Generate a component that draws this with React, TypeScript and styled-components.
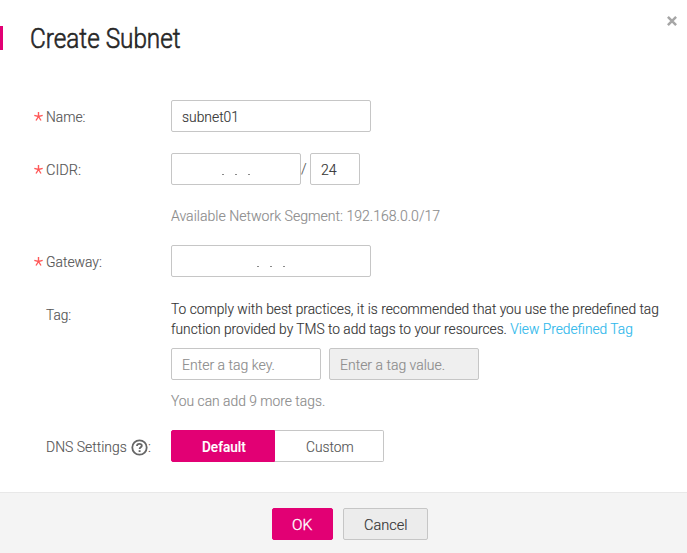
import React from "react";
import styled, { createGlobalStyle, css } from "styled-components";

const GlobalStyle = createGlobalStyle`
  * { box-sizing: border-box; }
  html, body { margin: 0; background: #fff; }
  body {
    font-family: Roboto, "Liberation Sans", sans-serif;
    font-size: 15px;
    font-weight: 300;
    line-height: 20px;
    color: #333;
    -webkit-text-stroke-width: 0.15px;
  }
`;

/* Condenses its text horizontally from the left edge. */
const Condensed = styled.span<{ $k: number }>`
  display: block;
  width: max-content;
  white-space: pre;
  transform: scaleX(${(p) => p.$k});
  transform-origin: 0 50%;
`;

const Dialog = styled.div`
  display: flex;
  flex-direction: column;
  height: 553px;
  overflow: hidden;
`;

const Header = styled.header`
  display: flex;
  justify-content: space-between;
  height: 100px;
`;

const Title = styled.h1`
  height: 24px;
  margin: 26px 0 0;
  padding-left: 27px;
  border-left: 3px solid #e20074;
  font-size: 27px;
  font-weight: 300;
  line-height: 26px;
  color: #262626;
  -webkit-text-stroke-width: 0.6px;
`;

const Close = styled.button`
  width: 10px;
  height: 10px;
  margin: 16px 10px 0 0;
  padding: 0;
  border: 0;
  background: none;
  svg { display: block; }
`;

const Form = styled.main`
  flex: 1;
  padding-left: 33px;
`;

const Row = styled.div<{ $gap: number }>`
  display: flex;
  align-items: flex-start;
  margin-bottom: ${(p) => p.$gap}px;
`;

const Label = styled.div<{ $lift?: number }>`
  display: flex;
  flex: none;
  align-items: center;
  width: 138px;
  height: ${(p) => 32 - 2 * (p.$lift ?? 0)}px;
  padding-top: 2px;
  color: #555;
`;

const LabelText = styled.div<{ $w: number }>`
  width: ${(p) => p.$w}px;
`;

const Mark = styled.span`
  flex: none;
  width: 13px;
  height: 10px;
  padding-left: 1px;
  svg { display: block; }
`;

const HelpIcon = styled.svg`
  flex: none;
  margin-top: 1px;
`;

const Content = styled.div`
  display: flex;
  flex-direction: column;
`;

const Line = styled.div<{ $gap?: number }>`
  display: flex;
  align-items: center;
  gap: ${(p) => p.$gap ?? 0}px;
`;

const Field = styled.div<{ $w: number; $muted?: boolean; $disabled?: boolean }>`
  display: flex;
  align-items: center;
  width: ${(p) => p.$w}px;
  height: 32px;
  padding: 2px 0 0 10px;
  border: 1px solid #c6c6c6;
  border-radius: 2px;
  background: ${(p) => (p.$disabled ? "#efefef" : "#fff")};
  color: ${(p) => (p.$muted ? "#8c8c8c" : "#333")};
`;

const Dots = styled.div<{ $left: number }>`
  display: flex;
  gap: 11px;
  padding: 8px 0 0 ${(p) => p.$left}px;
  span { width: 2px; height: 1px; background: #8a8a8a; }
`;

const Slash = styled.div`
  width: 9px;
  height: 20px;
  color: #555;
`;

const Hint = styled.div<{ $top: number }>`
  margin-top: ${(p) => p.$top}px;
  color: #8c8c8c;
`;

const Advice = styled.div`
  margin-bottom: 9px;
`;

const Link = styled.a`
  color: #2db8ec;
`;

const Segmented = styled.div`
  display: flex;
`;

const Segment = styled.button<{ $active?: boolean }>`
  height: 32px;
  padding: 2px 0 0 30px;
  border: 1px solid #c6c6c6;
  font: inherit;
  line-height: 20px;
  text-align: left;
  ${(p) =>
    p.$active
      ? css`
          width: 104px;
          border-color: #e20074;
          border-radius: 2px 0 0 2px;
          background: #e20074;
          color: #fff;
          font-weight: 500;
        `
      : css`
          width: 109px;
          border-left: 0;
          border-radius: 0 2px 2px 0;
          background: #fff;
          padding-left: 31px;
          color: #555;
        `}
`;

const Footer = styled.footer`
  display: flex;
  gap: 10px;
  height: 61px;
  padding: 15px 0 0 272px;
  border-top: 1px solid #e8e8e8;
  background: #f4f4f4;
`;

const Button = styled.button<{ $primary?: boolean }>`
  width: ${(p) => (p.$primary ? 61 : 85)}px;
  height: 32px;
  padding: 2px 0 0 ${(p) => (p.$primary ? 19 : 20)}px;
  border: 1px solid ${(p) => (p.$primary ? "#e20074" : "#c6c6c6")};
  border-radius: 2px;
  background: ${(p) => (p.$primary ? "#e20074" : "#ececec")};
  color: ${(p) => (p.$primary ? "#fff" : "#333")};
  font: inherit;
  line-height: 20px;
  text-align: left;
  -webkit-text-stroke-width: ${(p) => (p.$primary ? 0.35 : 0.15)}px;
`;

const Required = () => (
  <Mark>
    <svg width="9" height="9" viewBox="0 0 9 9" fill="none" stroke="#ff5a5a" strokeWidth="1.4">
      <path d="M4.5 0v4.3M.3 3.3l4.2 1.2 4.2-1.2M2 8.5l2.5-4 2.5 4" />
    </svg>
  </Mark>
);

const Octets = ({ left }: { left: number }) => (
  <Dots $left={left}>
    <span />
    <span />
    <span />
  </Dots>
);

export default function App() {
  return (
    <>
      <GlobalStyle />
      <Dialog>
        <Header>
          <Title>
            <Condensed $k={0.9}>Create Subnet</Condensed>
          </Title>
          <Close aria-label="Close">
            <svg width="10" height="10" viewBox="0 0 10 10" stroke="#a6a6a6" strokeWidth="2.5">
              <path d="M.9.9l8.2 8.2M9.1.9L.9 9.1" />
            </svg>
          </Close>
        </Header>
        <Form>
          <Row $gap={21}>
            <Label>
              <Required />
              <Condensed $k={0.92}>Name:</Condensed>
            </Label>
            <Field $w={200}>
              <Condensed $k={0.925}>subnet01</Condensed>
            </Field>
          </Row>
          <Row $gap={19}>
            <Label>
              <Required />
              <Condensed $k={0.97}>CIDR:</Condensed>
            </Label>
            <Content>
              <Line>
                <Field $w={130}>
                  <Octets left={40} />
                </Field>
                <Slash>
                  <Condensed $k={0.95}>/</Condensed>
                </Slash>
                <Field $w={50}>
                  <Condensed $k={0.94}>24</Condensed>
                </Field>
              </Line>
              <Hint $top={21}>
                <Condensed $k={0.938}>Available Network Segment: 192.168.0.0/17</Condensed>
              </Hint>
            </Content>
          </Row>
          <Row $gap={22}>
            <Label>
              <Required />
              <Condensed $k={0.925}>Gateway:</Condensed>
            </Label>
            <Field $w={200}>
              <Octets left={75} />
            </Field>
          </Row>
          <Row $gap={19}>
            <Label $lift={1}>
              <Mark />
              <Condensed $k={0.91}>Tag:</Condensed>
            </Label>
            <Content>
              <Advice>
                <Condensed $k={0.918}>
                  To comply with best practices, it is recommended that you use the predefined tag
                </Condensed>
                <Condensed $k={0.917}>
                  function provided by TMS to add tags to your resources.{" "}
                  <Link>View Predefined Tag</Link>
                </Condensed>
              </Advice>
              <Line $gap={8}>
                <Field $w={150} $muted>
                  <Condensed $k={0.935}>Enter a tag key.</Condensed>
                </Field>
                <Field $w={150} $muted $disabled>
                  <Condensed $k={0.932}>Enter a tag value.</Condensed>
                </Field>
              </Line>
              <Hint $top={11}>
                <Condensed $k={0.922}>You can add 9 more tags.</Condensed>
              </Hint>
            </Content>
          </Row>
          <Row $gap={0}>
            <Label>
              <Mark />
              <LabelText $w={85}>
                <Condensed $k={0.93}>DNS Settings</Condensed>
              </LabelText>
              <HelpIcon width="17" height="17" viewBox="0 0 17 17" fill="none" stroke="#666">
                <circle cx="8.5" cy="8.5" r="7.2" strokeWidth="1.8" />
                <path d="M6 7.1C6 5.6 7 4.9 8.4 4.9c1.5 0 2.4.8 2.4 1.9 0 1.5-2.2 1.6-2.2 3.3" strokeWidth="1.8" />
                <path d="M8.6 11.2v1.8" strokeWidth="1.9" />
              </HelpIcon>
              <Condensed $k={0.92}>:</Condensed>
            </Label>
            <Segmented>
              <Segment $active>
                <Condensed $k={0.905}>Default</Condensed>
              </Segment>
              <Segment>
                <Condensed $k={0.92}>Custom</Condensed>
              </Segment>
            </Segmented>
          </Row>
        </Form>
        <Footer>
          <Button $primary>
            <Condensed $k={1.03}>OK</Condensed>
          </Button>
          <Button>
            <Condensed $k={0.97}>Cancel</Condensed>
          </Button>
        </Footer>
      </Dialog>
    </>
  );
}
